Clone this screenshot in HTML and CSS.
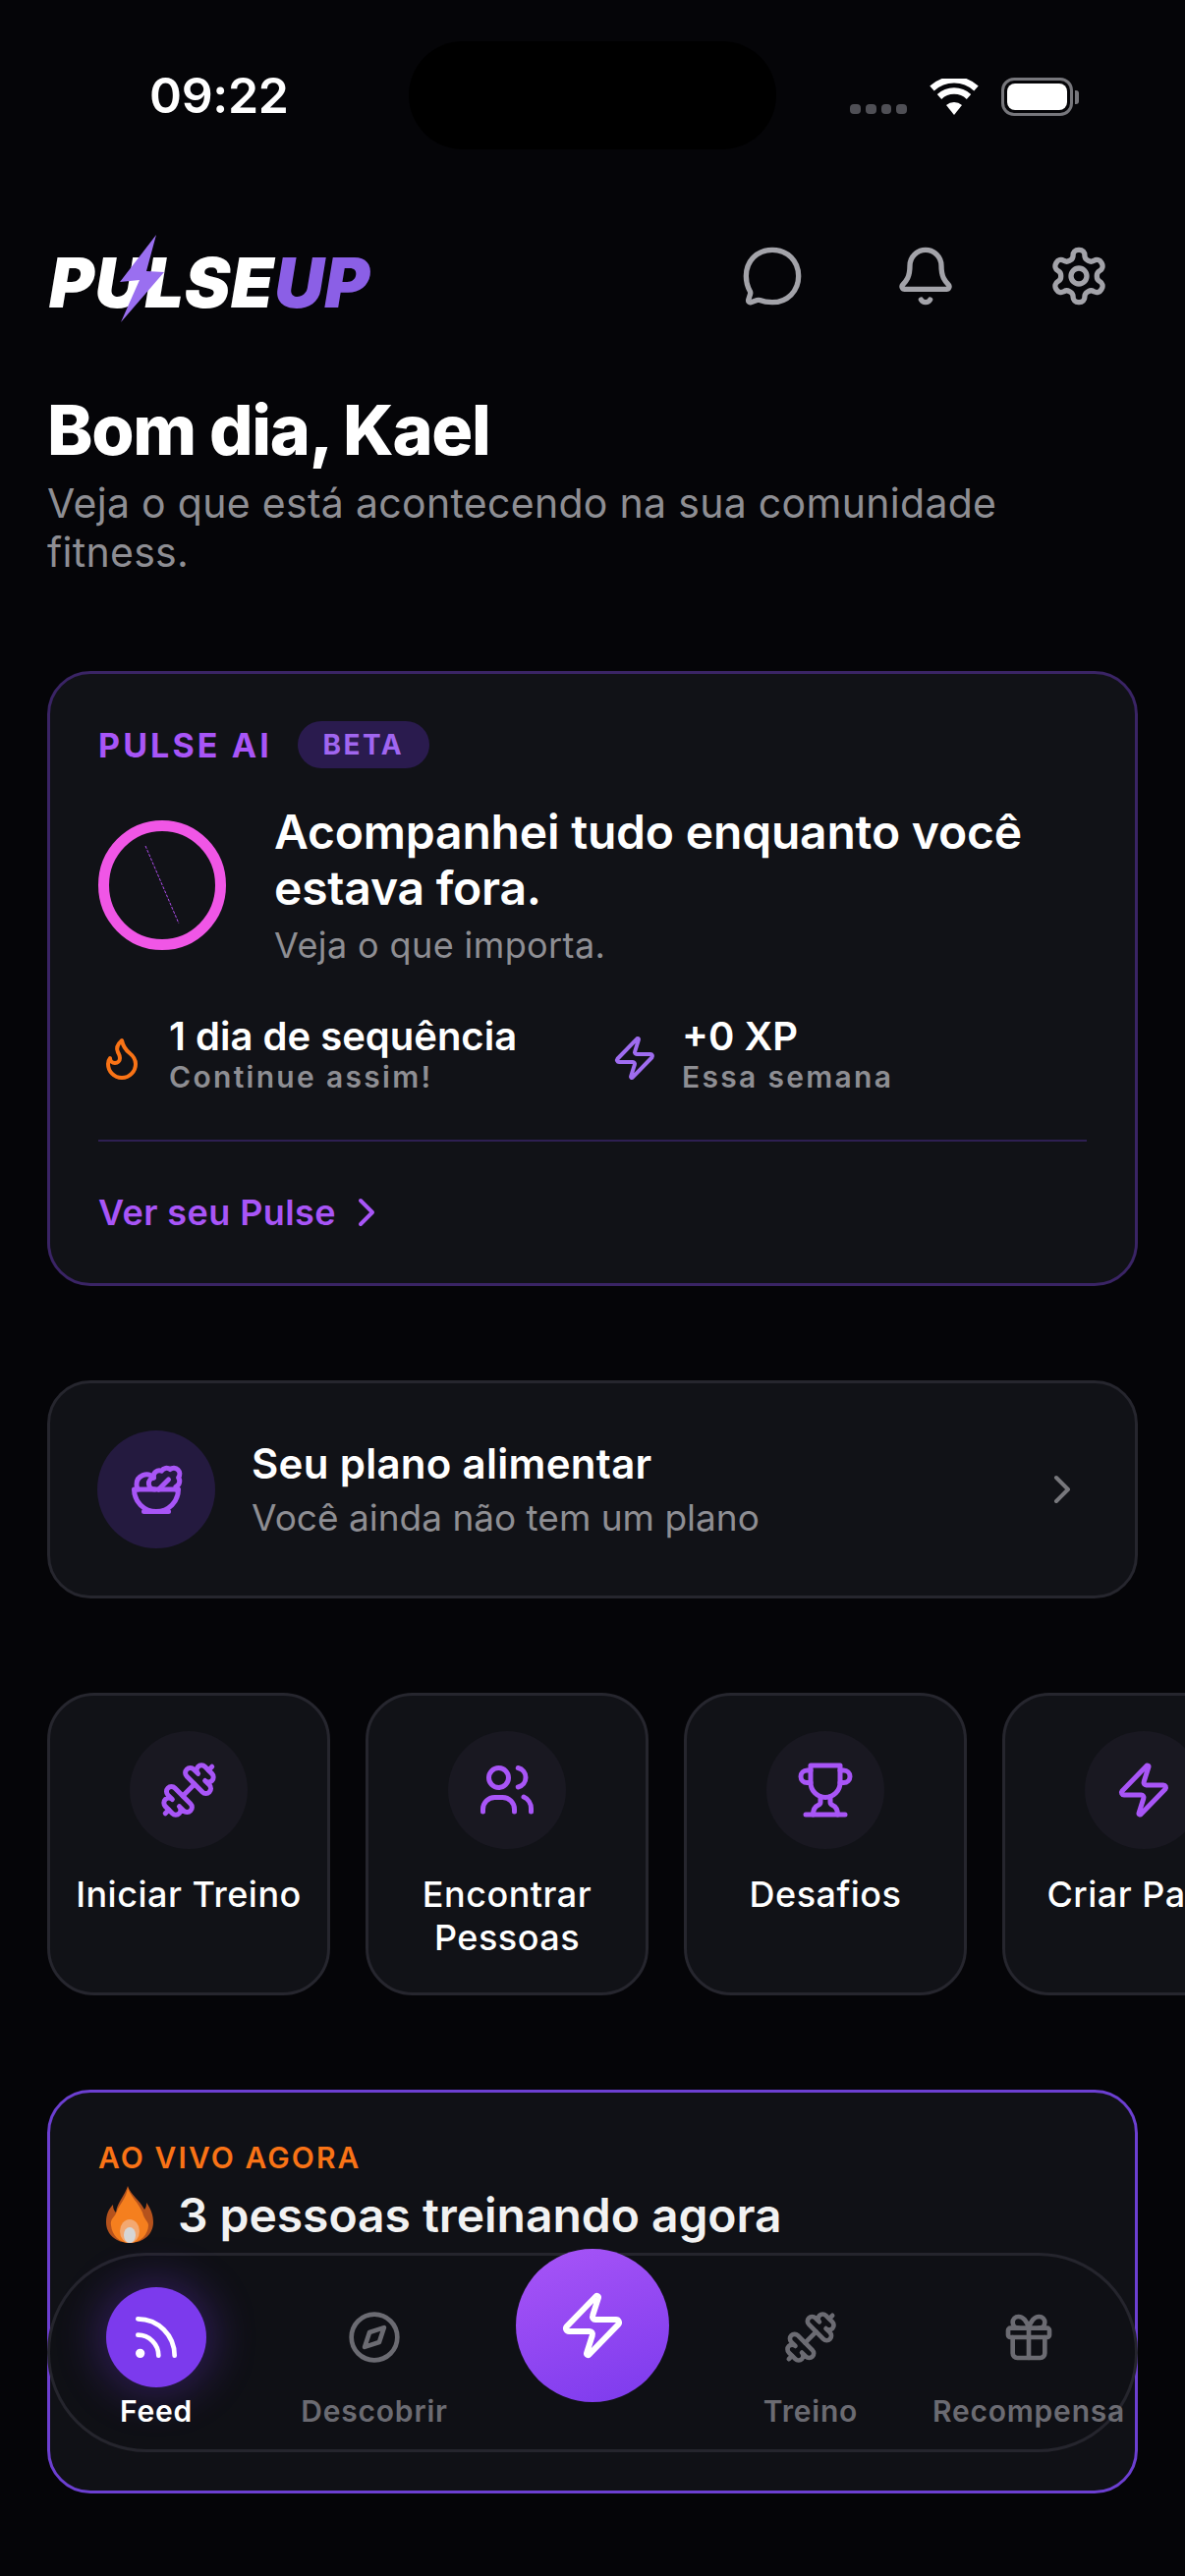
FILE: index.html
```html
<!DOCTYPE html>
<html lang="pt-BR">
<head>
<meta charset="utf-8">
<title>PulseUp</title>
<link rel="stylesheet" href="styles.css">
</head>
<body>
<svg class="sprite" width="0" height="0" aria-hidden="true">
  <defs>
    <symbol id="i-zap" viewBox="0 0 24 24"><path d="M4 14a1 1 0 0 1-.78-1.63l9.9-10.2a.5.5 0 0 1 .86.46l-1.92 6.02A1 1 0 0 0 13 10h7a1 1 0 0 1 .78 1.63l-9.9 10.2a.5.5 0 0 1-.86-.46l1.92-6.02A1 1 0 0 0 11 14z"/></symbol>
    <symbol id="i-dumbbell" viewBox="0 0 24 24"><g transform="matrix(-1 0 0 1 24 0)"><path d="M14.4 14.4 9.6 9.6"/><path d="M18.657 21.485a2 2 0 1 1-2.829-2.828l-1.767 1.768a2 2 0 1 1-2.829-2.829l6.364-6.364a2 2 0 1 1 2.829 2.829l-1.768 1.767a2 2 0 1 1 2.828 2.829z"/><path d="m21.5 21.5-1.4-1.4"/><path d="M3.9 3.9 2.5 2.5"/><path d="M6.404 12.768a2 2 0 1 1-2.829-2.829l1.768-1.767a2 2 0 1 1-2.828-2.829l2.828-2.828a2 2 0 1 1 2.829 2.828l1.767-1.768a2 2 0 1 1 2.829 2.829z"/></g></symbol>
    <symbol id="i-chevron" viewBox="0 0 24 24"><path d="m9 18 6-6-6-6"/></symbol>
  </defs>
</svg>
<div class="app">
  <div class="status">
    <span class="time">09:22</span>
    <div class="island"></div>
    <div class="status-right">
      <div class="signal"><i></i><i></i><i></i><i></i></div>
      <svg class="wifi" viewBox="0 0 50 38"><path d="M25 37 17 27a12 12 0 0 1 16 0z" class="wifi-fill"/><path d="M10 18.5a22 22 0 0 1 30 0" class="wifi-arc"/><path d="M2.5 10a33 33 0 0 1 45 0" class="wifi-arc"/></svg>
      <div class="battery"><div class="battery-body"><div class="battery-level"></div></div><div class="battery-tip"></div></div>
    </div>
  </div>

  <header class="topbar">
    <div class="logo">
      <span class="logo-text">PULSE<span class="logo-up">UP</span></span>
      <svg class="logo-bolt" viewBox="0 0 50 90"><path d="M39 0 2 48 22 46 3 89 47 38 29 37z"/></svg>
    </div>
    <div class="top-icons">
      <svg class="icon top-icon" viewBox="0 0 24 24"><path d="M12 2C6.200 2 2 6.300 2 12c0 2.200.6 4.200 1.500 5.800.2.300.2.600.1 1L2.900 21c-.2.700.3 1.200.9 1l2.400-.8c.4-.1.700-.1 1 0 1.500.6 3.100.8 4.800.8 5.800 0 10-4.300 10-10S17.800 2 12 2z"/></svg>
      <svg class="icon top-icon" viewBox="0 0 24 24"><path d="M10.268 21a2 2 0 0 0 3.464 0"/><path d="M3.262 15.326A1 1 0 0 0 4 17h16a1 1 0 0 0 .74-1.673C19.41 13.956 18 12.499 18 8A6 6 0 0 0 6 8c0 4.499-1.411 5.956-2.738 7.326"/></svg>
      <svg class="icon top-icon" viewBox="0 0 24 24"><path d="M12.22 2h-.44a2 2 0 0 0-2 2v.18a2 2 0 0 1-1 1.73l-.43.25a2 2 0 0 1-2 0l-.15-.08a2 2 0 0 0-2.73.73l-.22.38a2 2 0 0 0 .73 2.73l.15.1a2 2 0 0 1 1 1.72v.51a2 2 0 0 1-1 1.74l-.15.09a2 2 0 0 0-.73 2.73l.22.38a2 2 0 0 0 2.73.73l.15-.08a2 2 0 0 1 2 0l.43.25a2 2 0 0 1 1 1.73V20a2 2 0 0 0 2 2h.44a2 2 0 0 0 2-2v-.18a2 2 0 0 1 1-1.73l.43-.25a2 2 0 0 1 2 0l.15.08a2 2 0 0 0 2.73-.73l.22-.39a2 2 0 0 0-.73-2.73l-.15-.08a2 2 0 0 1-1-1.74v-.5a2 2 0 0 1 1-1.74l.15-.09a2 2 0 0 0 .73-2.73l-.22-.38a2 2 0 0 0-2.73-.73l-.15.08a2 2 0 0 1-2 0l-.43-.25a2 2 0 0 1-1-1.73V4a2 2 0 0 0-2-2z"/><circle cx="12" cy="12" r="3"/></svg>
    </div>
  </header>

  <section class="greeting">
    <h1>Bom dia, Kael</h1>
    <p>Veja o que está acontecendo na sua comunidade fitness.</p>
  </section>

  <main class="stack">
    <section class="card pulse-card">
      <div class="pulse-label"><span class="pulse-name">PULSE AI</span><span class="beta">BETA</span></div>
      <div class="pulse-main">
        <svg class="ring" viewBox="0 0 130 132"><ellipse cx="65" cy="66" rx="59.5" ry="60.5" class="ring-stroke"/><line x1="48" y1="26" x2="82" y2="105" class="ring-line"/></svg>
        <div class="pulse-copy">
          <h2>Acompanhei tudo enquanto você estava fora.</h2>
          <p>Veja o que importa.</p>
        </div>
      </div>
      <div class="stats">
        <div class="stat">
          <svg class="icon stat-icon flame" viewBox="0 0 24 24"><path d="M8.5 14.5A2.5 2.5 0 0 0 11 12c0-1.38-.5-2-1-3-1.072-2.143-.224-4.054 2-6 .5 2.5 2 4.9 4 6.5 2 1.6 3 3.5 3 5.5a7 7 0 1 1-14 0c0-1.153.433-2.294 1-3a2.5 2.5 0 0 0 2.5 2.5z"/></svg>
          <div><div class="stat-title">1 dia de sequência</div><div class="stat-sub">Continue assim!</div></div>
        </div>
        <div class="stat">
          <svg class="icon stat-icon bolt"><use href="#i-zap"/></svg>
          <div><div class="stat-title">+0 XP</div><div class="stat-sub">Essa semana</div></div>
        </div>
      </div>
      <div class="divider"></div>
      <div class="pulse-link"><span>Ver seu Pulse</span><svg class="icon link-chevron"><use href="#i-chevron"/></svg></div>
    </section>

    <section class="card plan-card">
      <div class="plan-icon">
        <svg class="icon purple salad" viewBox="0 0 24 24"><path d="M7 21h10"/><path d="M12 21a9 9 0 0 0 9-9H3a9 9 0 0 0 9 9Z"/><path d="M11.38 12a2.4 2.4 0 0 1-.4-4.77 2.4 2.4 0 0 1 3.2-2.77 2.4 2.4 0 0 1 3.47-.63 2.4 2.4 0 0 1 3.37 3.37 2.4 2.4 0 0 1-1.1 3.7 2.51 2.51 0 0 1 .03 1.1"/><path d="m13 12 4-4"/><path d="M10.9 7.25A3.99 3.99 0 0 0 4 10c0 .73.2 1.41.54 2"/></svg>
      </div>
      <div class="plan-copy"><div class="plan-title">Seu plano alimentar</div><div class="plan-sub">Você ainda não tem um plano</div></div>
      <svg class="icon plan-chevron"><use href="#i-chevron"/></svg>
    </section>

    <section class="actions">
      <div class="action"><div class="action-icon"><svg class="icon purple a-svg"><use href="#i-dumbbell"/></svg></div><div class="action-label">Iniciar Treino</div></div>
      <div class="action"><div class="action-icon"><svg class="icon purple a-svg" viewBox="0 0 24 24"><circle cx="8.600" cy="7" r="4"/><path d="M2.200 20.800v-1a4.800 4.800 0 0 1 4.800-4.800h3.200a4.800 4.800 0 0 1 4.800 4.800v1"/><path d="M16.500 3a4 4 0 0 1 0 7.800"/><path d="M18.800 14.800c1.800.8 3 2.700 3 4.700v1.300"/></svg></div><div class="action-label">Encontrar Pessoas</div></div>
      <div class="action"><div class="action-icon"><svg class="icon purple a-svg" viewBox="0 0 24 24"><path d="M6 9H4.500a2.500 2.500 0 0 1 0-5H6"/><path d="M18 9h1.500a2.500 2.500 0 0 0 0-5H18"/><path d="M4 22h16"/><path d="M10 14.660V17c0 .550-.470.980-.970 1.210C7.850 18.750 7 20.240 7 22"/><path d="M14 14.660V17c0 .550.470.980.970 1.210C16.150 18.750 17 20.240 17 22"/><path d="M18 2H6v7a6 6 0 0 0 12 0V2Z"/></svg></div><div class="action-label">Desafios</div></div>
      <div class="action"><div class="action-icon"><svg class="icon purple a-svg"><use href="#i-zap"/></svg></div><div class="action-label">Criar Pacto</div></div>
    </section>

    <section class="card live-card">
      <div class="live-label">AO VIVO AGORA</div>
      <div class="live-title">
        <svg class="fire" viewBox="0 0 48 58"><path class="fire-edge" d="M22 0c3 9 12 14 17 24 2-2 2-5 2-7 5 7 7 13 7 20 0 12-10 21-24 21S0 49 0 37c0-7 2-13 7-18 0 4 1 6 3 8C11 17 19 10 22 0z"/><path class="fire-body" d="M22 2c3 9 11 15 15 25 2 8 6 9 6 13 0 9-8 18-19 18S6 50 5 40c-1-6 3-8 5-12 3-9 11-16 12-26z"/><ellipse class="fire-glow" cx="24" cy="46" rx="10" ry="12"/><ellipse class="fire-core" cx="24" cy="50" rx="6" ry="8"/></svg>
        <span>3 pessoas treinando agora</span>
      </div>
    </section>
  </main>

  <nav class="nav">
    <div class="nav-item">
      <div class="nav-ico nav-active"><svg class="icon white n-svg" viewBox="0 0 24 24"><path d="M4 11a9 9 0 0 1 9 9"/><path d="M4 4a16 16 0 0 1 16 16"/><circle cx="5" cy="19" r="1"/></svg></div>
      <span class="nav-label active-label">Feed</span>
    </div>
    <div class="nav-item">
      <div class="nav-ico"><svg class="icon grey n-svg" viewBox="0 0 24 24"><circle cx="12" cy="12" r="10"/><polygon points="16.240 7.760 14.120 14.120 7.760 16.240 9.880 9.880"/></svg></div>
      <span class="nav-label">Descobrir</span>
    </div>
    <div class="nav-item">
      <div class="nav-main"><svg class="icon white main-svg"><use href="#i-zap"/></svg></div>
    </div>
    <div class="nav-item">
      <div class="nav-ico"><svg class="icon grey n-svg"><use href="#i-dumbbell"/></svg></div>
      <span class="nav-label">Treino</span>
    </div>
    <div class="nav-item">
      <div class="nav-ico"><svg class="icon grey n-svg" viewBox="0 0 24 24"><rect x="3" y="8" width="18" height="4" rx="1"/><path d="M12 8v13"/><path d="M19 12v7a2 2 0 0 1-2 2H7a2 2 0 0 1-2-2v-7"/><path d="M7.500 8a2.500 2.500 0 0 1 0-5A4.800 8 0 0 1 12 8a4.800 8 0 0 1 4.500-5 2.500 2.500 0 0 1 0 5"/></svg></div>
      <span class="nav-label">Recompensa</span>
    </div>
  </nav>
</div>
</body>
</html>
```
FILE: styles.css
```css
* { box-sizing: border-box; margin: 0; padding: 0; }
html, body { background: #050508; }
body { width: 1206px; height: 2622px; overflow: hidden; font-family: Inter, "Noto Sans", sans-serif; color: #fff; }
.sprite { position: absolute; }
.app { position: relative; width: 1206px; height: 2622px; overflow: hidden; padding: 0 48px; background: #050508; }

.icon { display: block; fill: none; stroke: currentColor; stroke-width: 2; stroke-linecap: round; stroke-linejoin: round; flex: none; }
.purple { color: #a855f7; }
.white { color: #fff; }
.grey { color: #6b6b72; }

/* status bar */
.status { display: flex; align-items: flex-start; height: 152px; padding-top: 42px; margin: 0 -48px; position: relative; }
.time { width: 416px; padding: 27px 0 0 152px; font-size: 50px; line-height: 56px; font-weight: 600; letter-spacing: -.3px; }
.island { width: 374px; height: 110px; border-radius: 55px; background: #000; flex: none; }
.status-right { display: flex; align-items: flex-end; margin-left: 75px; padding-top: 36px; height: 76px; }
.signal { display: flex; gap: 5px; width: 58px; margin-bottom: 2px; }
.signal i { width: 11px; height: 10px; border-radius: 4px; background: #4f4f55; }
.wifi { width: 50px; height: 38px; margin-left: 23px; }
.wifi-fill { fill: #fff; }
.wifi-arc { fill: none; stroke: #fff; stroke-width: 6.500; }
.battery { display: flex; align-items: center; margin-left: 23px; }
.battery-body { width: 73px; height: 39px; border: 3px solid #77777c; border-radius: 13px; padding: 3px; }
.battery-level { width: 100%; height: 100%; background: #fff; border-radius: 8px; }
.battery-tip { width: 4px; height: 14px; background: #77777c; border-radius: 0 3px 3px 0; margin-left: 2px; }

/* top bar */
.topbar { display: flex; justify-content: space-between; align-items: center; margin-top: 87px; height: 90px; }
.logo { position: relative; width: 330px; height: 90px; }
.logo-text { display: block; padding: 18px 0 0 2px; font-size: 70px; line-height: 62px; font-weight: 900; font-style: italic; letter-spacing: .6px; white-space: nowrap; }
.logo-up { color: #8b5fe6; }
.logo-bolt { position: absolute; left: 72px; top: 0; width: 50px; height: 90px; }
.logo-bolt path { fill: #9a6ff0; }
.top-icons { display: flex; gap: 92px; margin-right: 28px; margin-top: -6px; }
.top-icon { width: 64px; height: 64px; color: #a3a3a9; }

/* greeting */
.greeting { margin-top: 69px; }
.greeting h1 { font-size: 70px; line-height: 80px; font-weight: 800; letter-spacing: -1.300px; }
.greeting p { margin-top: 9px; font-size: 41px; line-height: 50px; letter-spacing: .3px; color: #8e8e93; font-weight: 400; }

/* stack */
.stack { display: flex; flex-direction: column; gap: 96px; margin-top: 96px; }
.card { border: 3px solid #26262e; border-radius: 44px; background: #111217; }

/* pulse */
.pulse-card { height: 626px; padding: 48px 49px 0; border-color: #3a2465; }
.pulse-label { display: flex; align-items: center; gap: 26px; height: 48px; }
.pulse-name { font-size: 34px; font-weight: 700; letter-spacing: 3.100px; color: #a855f7; }
.beta { display: flex; align-items: center; justify-content: center; width: 134px; height: 48px; border-radius: 24px; background: #2a1b4e; font-size: 28px; font-weight: 700; letter-spacing: 2.500px; color: #a066f0; }
.pulse-main { display: flex; align-items: center; gap: 49px; margin-top: 36px; }
.ring { width: 130px; height: 132px; flex: none; }
.ring-stroke { fill: none; stroke: #f056e6; stroke-width: 11; }
.ring-line { stroke: #b14df0; stroke-width: 1; stroke-dasharray: 3 1.500; }
.pulse-copy h2 { font-size: 48px; line-height: 57px; font-weight: 600; letter-spacing: -.2px; }
.pulse-copy p { margin-top: 8px; font-size: 36px; line-height: 44px; letter-spacing: .4px; color: #8e8e93; }
.stats { display: grid; grid-template-columns: 522px 1fr; margin-top: 48px; }
.stat { display: flex; align-items: center; gap: 24px; }
.stat-icon { width: 48px; height: 48px; margin-top: 6px; }
.flame { color: #f97316; }
.bolt { color: #9f6cf0; }
.stat-title { font-size: 40px; line-height: 46px; font-weight: 600; }
.stat-sub { margin-top: -1px; font-size: 30px; line-height: 38px; font-weight: 600; letter-spacing: 2.300px; color: #8e8e93; }
.divider { height: 2px; margin-top: 45px; background: #2e1f52; }
.pulse-link { display: flex; align-items: center; gap: 7px; margin-top: 50px; height: 44px; font-size: 36px; font-weight: 600; letter-spacing: .4px; color: #a855f7; }
.link-chevron { width: 48px; height: 48px; }

/* plan */
.plan-card { display: flex; align-items: center; gap: 37px; height: 222px; padding: 0 50px 0 48px; }
.plan-icon { display: flex; align-items: center; justify-content: center; width: 120px; height: 120px; border-radius: 50%; background: #241a3f; flex: none; }
.salad { width: 60px; height: 60px; }
.plan-copy { margin-top: 2px; }
.plan-title { font-size: 42px; line-height: 55px; font-weight: 600; letter-spacing: .3px; }
.plan-sub { font-size: 37px; line-height: 55px; color: #8e8e93; }
.plan-chevron { width: 48px; height: 48px; margin-left: auto; color: #77777c; }

/* actions */
.actions { display: flex; gap: 36px; width: 1400px; }
.action { display: flex; flex-direction: column; align-items: center; width: 288px; height: 308px; padding: 36px 10px 0; border: 3px solid #26262e; border-radius: 48px; background: #111217; flex: none; }
.action-icon { display: flex; align-items: center; justify-content: center; width: 120px; height: 120px; border-radius: 50%; background: #191821; flex: none; }
.a-svg { width: 60px; height: 60px; }
.action-label { margin-top: 24px; font-size: 36px; line-height: 44px; font-weight: 500; letter-spacing: .5px; text-align: center; }

/* live */
.live-card { height: 411px; padding: 46px 49px 0; border-color: #6c3fd1; background: #101116; }
.live-label { font-size: 30px; line-height: 40px; font-weight: 600; letter-spacing: 2.100px; color: #f97316; }
.live-title { display: flex; align-items: center; gap: 25px; height: 60px; margin-top: 8px; font-size: 48px; font-weight: 600; letter-spacing: -.05px; color: #f2f2f2; }
.fire { width: 48px; height: 58px; margin-left: 8px; flex: none; }
.fire-edge { fill: #b5521c; }
.fire-body { fill: #f57f1e; }
.fire-glow { fill: #f3a870; }
.fire-core { fill: #d6d6d6; }

/* nav */
.nav { position: absolute; left: 48px; top: 2293px; display: grid; grid-template-columns: repeat(5, 222px); width: 1110px; height: 203px; padding-top: 32px; border: 3px solid #25252d; border-radius: 101px; background: #0f1015; }
.nav-item { display: flex; flex-direction: column; align-items: center; margin: 0 3px 0 -3px; }
.nav-ico { display: flex; align-items: center; justify-content: center; width: 102px; height: 102px; border-radius: 50%; flex: none; }
.nav-active { background: #7c3aed; box-shadow: 0 0 44px 8px rgba(124, 58, 237, .3); }
.n-svg { width: 56px; height: 56px; }
.nav-label { margin-top: 6px; font-size: 30px; line-height: 36px; font-weight: 600; letter-spacing: .8px; color: #6b6b72; white-space: nowrap; }
.active-label { color: #fff; }
.nav-main { display: flex; align-items: center; justify-content: center; width: 156px; height: 156px; margin-top: -39px; border-radius: 50%; background: linear-gradient(160deg, #a855f7, #7c3aed); flex: none; }
.main-svg { width: 72px; height: 72px; }
```
